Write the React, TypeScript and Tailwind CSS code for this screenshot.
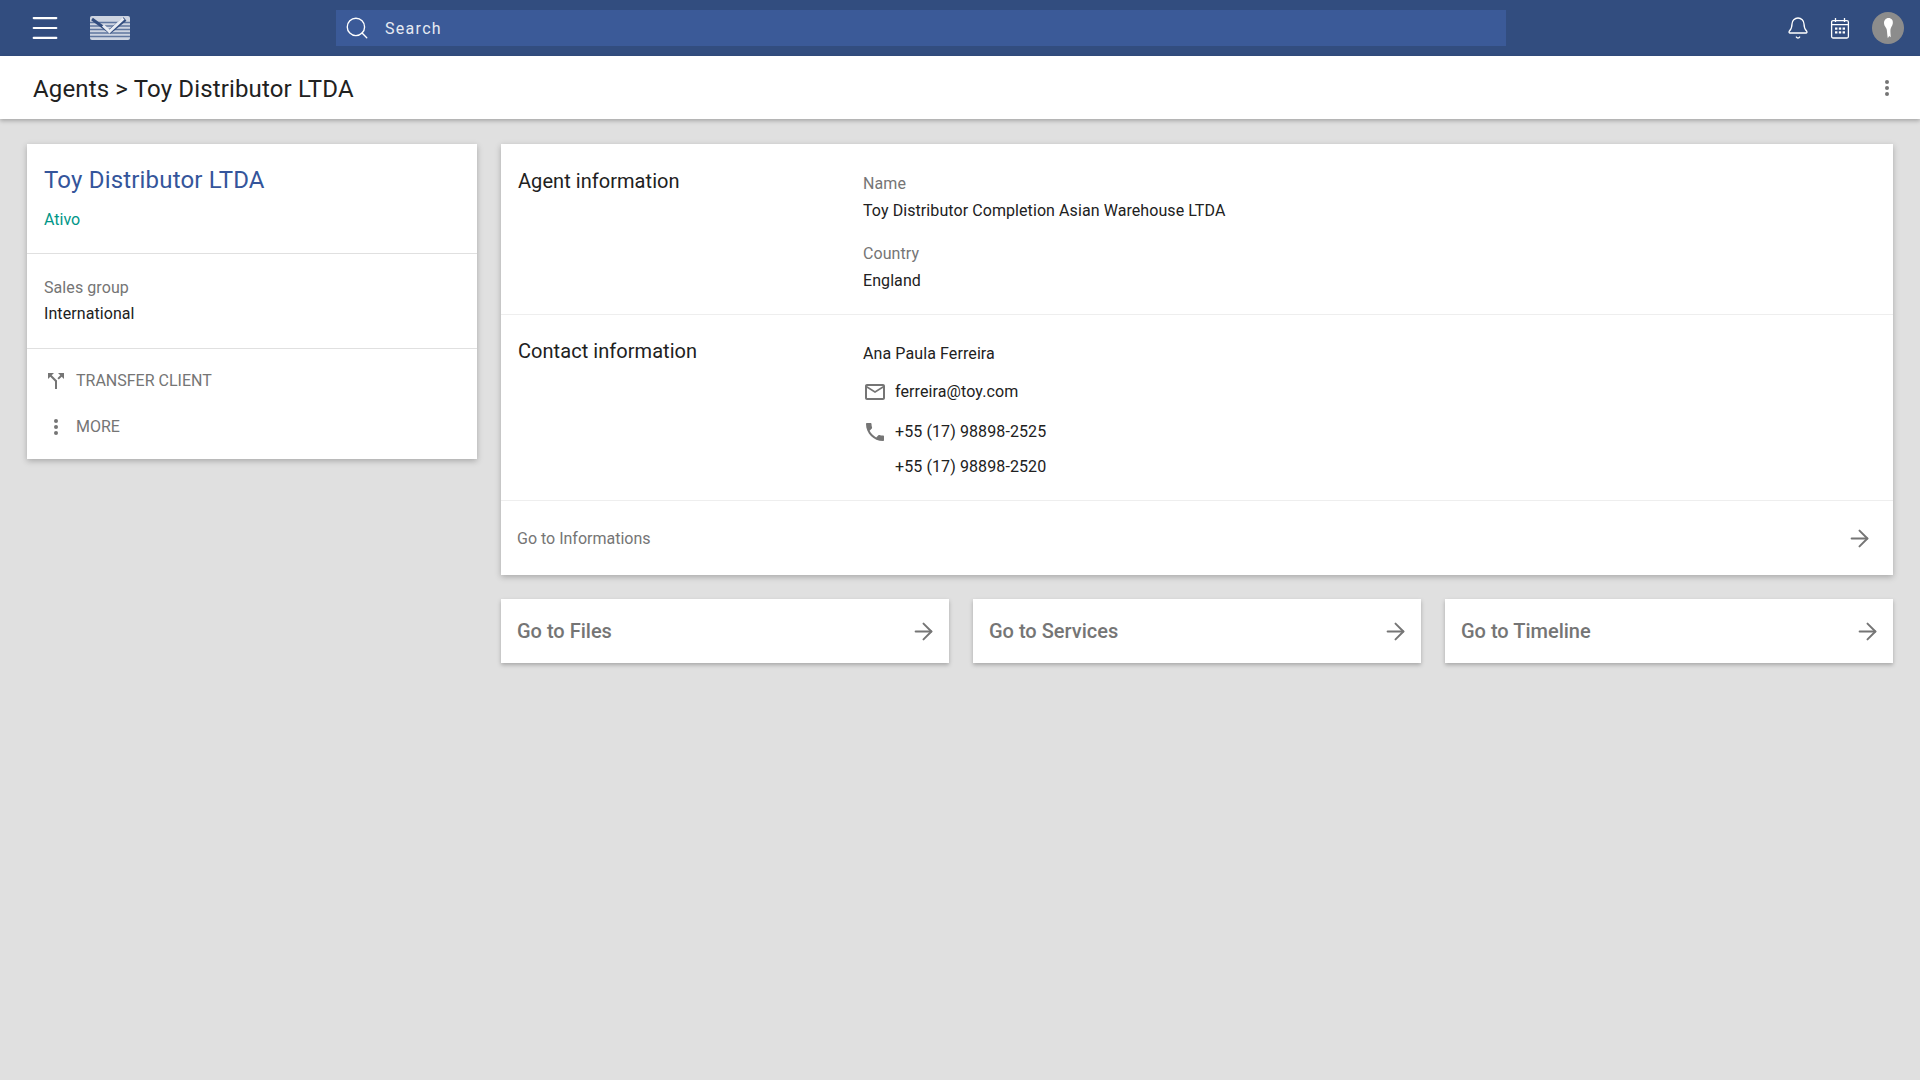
import type { ReactNode } from 'react';
import { ArrowRight, Bell, Menu, Search } from 'lucide-react';

const Logo = () => (
  <svg width="40" height="24" viewBox="0 0 40 24">
    <rect x="0" y="0" width="40" height="24" rx="2" fill="#cdd4e1" />
    <path d="M0 6.5h40M0 10h40M0 13.5h40M0 17h40M0 20.5h40" stroke="#5f769f" strokeWidth="1.3" />
    <path d="M2 3l17 12.5" fill="none" stroke="#324d7f" strokeWidth="3" />
    <path d="M19 16L35 3" fill="none" stroke="#324d7f" strokeWidth="4.5" />
    <path d="M13 9.5l6.5 6L33.5 2.5" fill="none" stroke="#e8ecf3" strokeWidth="3" />
  </svg>
);

const Dots = ({ className }: { className?: string }) => (
  <svg width="24" height="24" viewBox="0 0 24 24" fill="currentColor" className={className}>
    <circle cx="12" cy="6" r="2" />
    <circle cx="12" cy="12" r="2" />
    <circle cx="12" cy="18" r="2" />
  </svg>
);

const CalendarIcon = () => (
  <svg width="24" height="24" viewBox="0 0 24 24" fill="none" stroke="currentColor" strokeWidth="1.3">
    <rect x="3.6" y="4.6" width="16.8" height="17.4" rx="1.5" />
    <path d="M3.6 8.6h16.8M7.5 2v4M16.5 2v4" />
    <g fill="currentColor" stroke="none">
      <rect x="7" y="11.5" width="2.4" height="2.2" />
      <rect x="10.8" y="11.5" width="2.4" height="2.2" />
      <rect x="14.6" y="11.5" width="2.4" height="2.2" />
      <rect x="7" y="15.3" width="2.4" height="2.2" />
      <rect x="10.8" y="15.3" width="2.4" height="2.2" />
      <rect x="14.6" y="15.3" width="2.4" height="2.2" />
    </g>
  </svg>
);

const Avatar = () => (
  <svg width="32" height="32" viewBox="0 0 32 32">
    <circle cx="16" cy="16" r="16" fill="#8c8c8c" />
    <path d="M16.5 6c3 0 4.8 2.4 4.3 5.4-.4 2.4-2 3.8-2.3 5.8-.3 2.2.2 5 .3 8l-1.6-1.2-1.4 2.2c-.5-3-.7-6-1-8.4-.3-2.4-2.8-3.6-2.8-6.6 0-3 2-5.2 4.5-5.2z" fill="#ffffff" />
  </svg>
);

const TransferIcon = () => (
  <svg width="24" height="24" viewBox="0 0 24 24" fill="currentColor">
    <path d="M14 4l2.29 2.29-2.88 2.88 1.42 1.42 2.88-2.88L20 10V4zm-4 0H4v6l2.29-2.29 4.71 4.7V20h2v-8.41l-5.29-5.3z" />
  </svg>
);

const MailIcon = () => (
  <svg width="24" height="24" viewBox="0 0 24 24" fill="currentColor">
    <path d="M20 4H4c-1.1 0-2 .9-2 2v12c0 1.1.9 2 2 2h16c1.1 0 2-.9 2-2V6c0-1.1-.9-2-2-2zm0 14H4V8l8 5 8-5v10zm-8-7L4 6h16l-8 5z" />
  </svg>
);

const PhoneIcon = () => (
  <svg width="24" height="24" viewBox="0 0 24 24" fill="currentColor">
    <path d="M6.62 10.79c1.44 2.83 3.76 5.14 6.59 6.59l2.2-2.2c.27-.27.67-.36 1.02-.24 1.12.37 2.33.57 3.57.57.55 0 1 .45 1 1V20c0 .55-.45 1-1 1-9.39 0-17-7.61-17-17 0-.55.45-1 1-1h3.5c.55 0 1 .45 1 1 0 1.25.2 2.45.57 3.57.11.35.03.74-.25 1.02l-2.2 2.2z" />
  </svg>
);

const ActionRow = ({ icon, label }: { icon: ReactNode; label: string }) => (
  <div className="flex items-center h-[46px] pl-[17px] text-[#757575]">
    <span className="w-[24px] flex justify-center">{icon}</span>
    <span className="ml-[8px] text-[16px]">{label}</span>
  </div>
);

const LinkCard = ({ label }: { label: string }) => (
  <div className="flex-1 h-[64px] bg-white shadow-[0_2px_4px_rgba(0,0,0,0.25)] flex items-center justify-between pl-4 pr-[12px] text-[#757575]">
    <span className="text-[20px] font-medium">{label}</span>
    <ArrowRight size={27} strokeWidth={1.75} />
  </div>
);

export default function App() {
  return (
    <div className="min-h-screen bg-[#e0e0e0] font-['Roboto',sans-serif] text-[#212121] flex flex-col">
      <header className="h-[56px] bg-[#324d7f] flex items-center text-white">
        <div className="w-[336px] flex items-center shrink-0">
          <Menu size={34} strokeWidth={1.5} className="ml-[28px]" />
          <span className="ml-[28px]"><Logo /></span>
        </div>
        <div className="w-[1170px] h-[36px] bg-[#3b5a98] flex items-center pl-[8px] shrink-0">
          <Search size={26} strokeWidth={1.25} />
          <span className="ml-[15px] pt-[2px] text-[16px] tracking-[1.3px] text-[#e6eaf2]">Search</span>
        </div>
        <div className="ml-auto flex items-center gap-[18px] pr-[16px]">
          <Bell size={24} strokeWidth={1.3} />
          <CalendarIcon />
          <span className="ml-[2px]"><Avatar /></span>
        </div>
      </header>

      <div className="h-[63px] bg-white shadow-[0_2px_4px_rgba(0,0,0,0.25)] flex items-center justify-between pl-[33px] pr-[21px]">
        <h1 className="pt-[2px] text-[24px] font-normal tracking-[0.15px]">Agents &gt; Toy Distributor LTDA</h1>
        <Dots className="text-[#757575]" />
      </div>

      <main className="flex items-start gap-[24px] pl-[27px] pr-[27px] pt-[25px]">
        <aside className="w-[450px] shrink-0 bg-white shadow-[0_2px_6px_rgba(0,0,0,0.25)]">
          <div className="h-[110px] px-[17px] pt-[19px] border-b border-[#e0e0e0]">
            <h2 className="text-[24px] leading-[34px] tracking-[0.18px] text-[#34559b]">Toy Distributor LTDA</h2>
            <p className="mt-[11px] text-[16px] leading-[24px] text-[#009688]">Ativo</p>
          </div>
          <div className="h-[95px] px-[17px] pt-[20px] border-b border-[#e0e0e0]">
            <p className="text-[16px] leading-[27px] tracking-[0.08px] text-[#757575]">Sales group</p>
            <p className="text-[16px] leading-[26px] tracking-[0.08px]">International</p>
          </div>
          <div className="pt-[9px] pb-[9px]">
            <ActionRow icon={<TransferIcon />} label="TRANSFER CLIENT" />
            <ActionRow icon={<Dots />} label="MORE" />
          </div>
        </aside>

        <div className="flex-1 flex flex-col gap-[24px]">
          <section className="bg-white shadow-[0_2px_6px_rgba(0,0,0,0.25)]">
            <div className="h-[171px] flex border-b border-[#eeeeee] px-[17px] pt-[23px]">
              <h3 className="w-[345px] text-[20px] leading-[28px] tracking-[0.05px] shrink-0">Agent information</h3>
              <div className="mt-[3px] tracking-[0.08px]">
                <p className="text-[16px] leading-[27px] text-[#757575]">Name</p>
                <p className="text-[16px] leading-[27px]">Toy Distributor Completion Asian Warehouse LTDA</p>
                <p className="mt-[16px] text-[16px] leading-[27px] text-[#757575]">Country</p>
                <p className="text-[16px] leading-[27px]">England</p>
              </div>
            </div>
            <div className="h-[186px] flex border-b border-[#eeeeee] px-[17px] pt-[22px]">
              <h3 className="w-[345px] text-[20px] leading-[28px] tracking-[0.05px] shrink-0">Contact information</h3>
              <div className="text-[16px] tracking-[0.1px]">
                <p className="leading-[24px] mt-[5px]">Ana Paula Ferreira</p>
                <div className="flex items-center mt-[14px] h-[24px]">
                  <span className="text-[#757575]"><MailIcon /></span>
                  <span className="ml-[8px]">ferreira@toy.com</span>
                </div>
                <div className="flex items-center mt-[16px] h-[24px]">
                  <span className="text-[#757575]"><PhoneIcon /></span>
                  <span className="ml-[8px]">+55 (17) 98898-2525</span>
                </div>
                <p className="ml-[32px] mt-[11px] leading-[24px]">+55 (17) 98898-2520</p>
              </div>
            </div>
            <div className="h-[74px] flex items-center justify-between pl-[16px] pr-[20px] text-[#757575]">
              <span className="pt-[1px] text-[16px]">Go to Informations</span>
              <ArrowRight size={27} strokeWidth={1.75} />
            </div>
          </section>

          <div className="flex gap-[24px]">
            <LinkCard label="Go to Files" />
            <LinkCard label="Go to Services" />
            <LinkCard label="Go to Timeline" />
          </div>
        </div>
      </main>
    </div>
  );
}
